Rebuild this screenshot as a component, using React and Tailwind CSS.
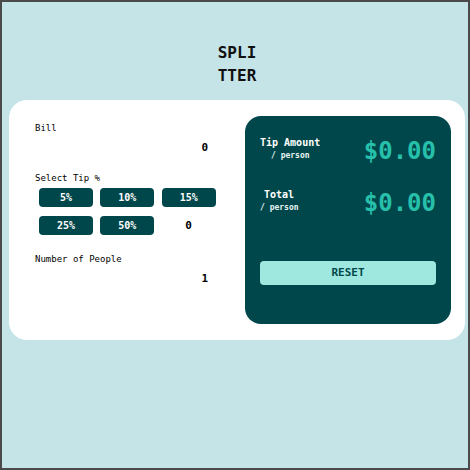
import React, { useState } from "react";

const mono = { fontFamily: '"DejaVu Sans Mono", "Liberation Mono", monospace' };

const TipButton = ({ label, onClick }) => (
  <button
    onClick={onClick}
    className="h-[19px] w-[54px] rounded-[4px] bg-[#00474b] text-[10px] font-bold leading-none text-white"
  >
    {label}
  </button>
);

const App = () => {
  const [bill, setBill] = useState("0");
  const [custom, setCustom] = useState("0");
  const [people, setPeople] = useState("1");

  return (
    <div
      className="flex min-h-[470px] flex-col border-2 border-[#4a4a4a] bg-[#c5e4e7] text-black"
      style={mono}
    >
      <h1 className="ml-[4px] mt-[39px] flex flex-col items-center text-[16px] font-bold leading-[23px] text-[#111]">
        <span>SPLI</span>
        <span>TTER</span>
      </h1>

      <div className="ml-[7px] mr-[3px] mt-[13px] flex h-[240px] rounded-[18px] bg-white">
        <div className="flex w-[210px] flex-col pl-[26px] pt-[22px]">
          <label className="text-[9px] leading-[12px]">Bill</label>
          <input
            value={bill}
            onChange={(e) => setBill(e.target.value)}
            className="mt-[6px] h-[16px] w-[173px] bg-transparent text-right text-[11px] font-bold outline-none"
          />

          <label className="mt-[16px] text-[9px] leading-[12px]">Select Tip %</label>
          <div className="ml-[4px] mt-[4px] grid w-[176px] grid-cols-3 gap-x-[8px] gap-y-[9px]">
            <TipButton label="5%" />
            <TipButton label="10%" />
            <TipButton label="15%" />
            <TipButton label="25%" />
            <TipButton label="50%" />
            <input
              value={custom}
              onChange={(e) => setCustom(e.target.value)}
              className="h-[19px] w-[54px] bg-transparent text-center text-[11px] font-bold outline-none"
            />
          </div>

          <label className="mt-[18px] text-[9px] leading-[12px]">Number of People</label>
          <input
            value={people}
            onChange={(e) => setPeople(e.target.value)}
            className="mt-[6px] h-[16px] w-[173px] bg-transparent text-right text-[11px] font-bold outline-none"
          />
        </div>

        <div className="ml-auto mr-[14px] mt-[16px] flex h-[208px] w-[206px] flex-col rounded-[16px] bg-[#00474b] px-[15px] pt-[20px] text-white">
          <div className="flex items-start justify-between">
            <div className="flex flex-col">
              <span className="text-[10px] font-bold leading-[14px]">Tip Amount</span>
              <span className="ml-[11px] text-[8px] font-bold leading-[12px] text-[#e8f4f4]">/ person</span>
            </div>
            <span className="mt-[1px] text-[24px] font-bold leading-[28px] text-[#26c0ab]">$0.00</span>
          </div>

          <div className="mt-[23px] flex items-start justify-between">
            <div className="flex flex-col">
              <span className="ml-[4px] text-[10px] font-bold leading-[14px]">Total</span>
              <span className="text-[8px] font-bold leading-[12px] text-[#e8f4f4]">/ person</span>
            </div>
            <span className="mt-[1px] text-[24px] font-bold leading-[28px] text-[#26c0ab]">$0.00</span>
          </div>

          <button
            onClick={() => {
              setBill("0");
              setCustom("0");
              setPeople("1");
            }}
            className="mt-[44px] h-[24px] w-full rounded-[4px] bg-[#9fe8df] text-[11px] font-bold text-[#00474b]"
          >
            RESET
          </button>
        </div>
      </div>
    </div>
  );
};

export default App;
